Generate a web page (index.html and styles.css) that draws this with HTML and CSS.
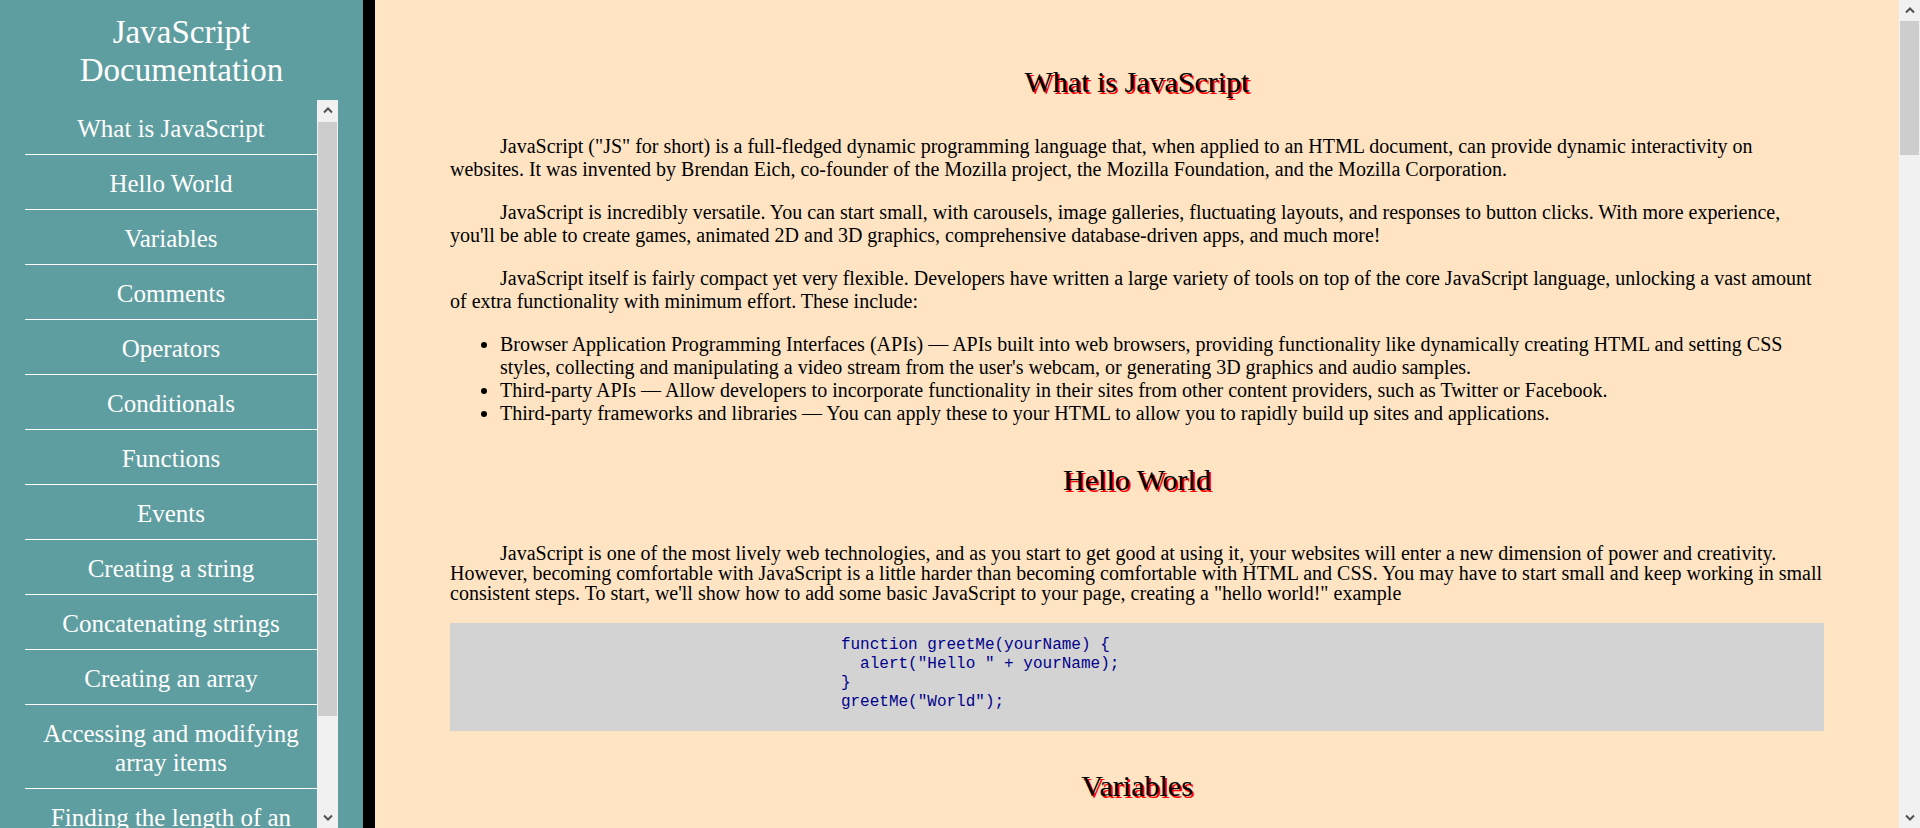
FILE: index.html
```html
<!DOCTYPE html>
<html lang="en">
<head>
<meta charset="utf-8">
<title>JavaScript Documentation</title>
<link rel="stylesheet" href="styles.css">
</head>
<body>
<nav class="navbar" id="navbar">
  <header class="nav-title">JavaScript Documentation</header>
  <div class="nav-scroll">
    <ul class="nav-list">
      <li><a class="nav-link" href="#What_is_JavaScript">What is JavaScript</a></li>
      <li><a class="nav-link" href="#Hello_World">Hello World</a></li>
      <li><a class="nav-link" href="#Variables">Variables</a></li>
      <li><a class="nav-link" href="#Comments">Comments</a></li>
      <li><a class="nav-link" href="#Operators">Operators</a></li>
      <li><a class="nav-link" href="#Conditionals">Conditionals</a></li>
      <li><a class="nav-link" href="#Functions">Functions</a></li>
      <li><a class="nav-link" href="#Events">Events</a></li>
      <li><a class="nav-link" href="#Creating_a_string">Creating a string</a></li>
      <li><a class="nav-link" href="#Concatenating_strings">Concatenating strings</a></li>
      <li><a class="nav-link" href="#Creating_an_array">Creating an array</a></li>
      <li><a class="nav-link" href="#Accessing_and_modifying_array_items">Accessing and modifying array items</a></li>
      <li><a class="nav-link" href="#Finding_the_length_of_an_array">Finding the length of an array</a></li>
      <li><a class="nav-link" href="#Removing_items_from_an_array">Removing items from an array</a></li>
    </ul>
    <div class="scrollbar">
      <span class="sb-btn"><svg width="10" height="7" viewBox="0 0 10 7"><path d="M1 5.5L5 1.5L9 5.5" fill="none" stroke="#505050" stroke-width="2"/></svg></span>
      <span class="sb-track"><span class="sb-thumb nav-thumb"></span></span>
      <span class="sb-btn"><svg width="10" height="7" viewBox="0 0 10 7"><path d="M1 1.5L5 5.5L9 1.5" fill="none" stroke="#505050" stroke-width="2"/></svg></span>
    </div>
  </div>
</nav>
<main class="main-doc" id="main-doc">
  <section class="main-section" id="What_is_JavaScript">
    <header class="section-title">What is JavaScript</header>
    <p>JavaScript ("JS" for short) is a full-fledged dynamic programming language that, when applied to an HTML document, can provide dynamic interactivity on websites. It was invented by Brendan Eich, co-founder of the Mozilla project, the Mozilla Foundation, and the Mozilla Corporation.</p>
    <p>JavaScript is incredibly versatile. You can start small, with carousels, image galleries, fluctuating layouts, and responses to button clicks. With more experience, you'll be able to create games, animated 2D and 3D graphics, comprehensive database-driven apps, and much more!</p>
    <p>JavaScript itself is fairly compact yet very flexible. Developers have written a large variety of tools on top of the core JavaScript language, unlocking a vast amount of extra functionality with minimum effort. These include:</p>
    <ul class="bullets">
      <li>Browser Application Programming Interfaces (APIs) — APIs built into web browsers, providing functionality like dynamically creating HTML and setting CSS styles, collecting and manipulating a video stream from the user's webcam, or generating 3D graphics and audio samples.</li>
      <li>Third-party APIs — Allow developers to incorporate functionality in their sites from other content providers, such as Twitter or Facebook.</li>
      <li>Third-party frameworks and libraries — You can apply these to your HTML to allow you to rapidly build up sites and applications.</li>
    </ul>
  </section>

  <section class="main-section" id="Hello_World">
    <header class="section-title">Hello World</header>
    <p class="tight">JavaScript is one of the most lively web technologies, and as you start to get good at using it, your websites will enter a new dimension of power and creativity. However, becoming comfortable with JavaScript is a little harder than becoming comfortable with HTML and CSS. You may have to start small and keep working in small consistent steps. To start, we'll show how to add some basic JavaScript to your page, creating a "hello world!" example</p>
    <pre class="code"><code>function greetMe(yourName) {
  alert("Hello " + yourName);
}
greetMe("World");</code></pre>
  </section>

  <section class="main-section" id="Variables">
    <header class="section-title">Variables</header>
    <p>Variables are containers that you can store values in. You start by declaring a variable with the var (less recommended) or the let keyword, followed by the name you give to the variable. A semicolon at the end of a line indicates where a statement ends. It is only required when you need to separate statements on a single line.</p>
    <p>After declaring a variable, you can give it a value, and later on you can retrieve the value by calling the variable name. You can also declare and initialize a variable on the same line.</p>
    <pre class="code"><code>let myVariable;
myVariable = 'Bob';
let myName = 'Chris';
myVariable;</code></pre>
  </section>

  <section class="main-section" id="Comments">
    <header class="section-title">Comments</header>
    <p>Comments are snippets of text that can be added along with code. The browser ignores text marked as comments. You can write comments in JavaScript just as you can in CSS. If your comment contains no line breaks, it's an option to put it behind two slashes.</p>
    <pre class="code"><code>/*
Everything in between is a comment.
*/
// This is a comment</code></pre>
  </section>

  <section class="main-section" id="Operators">
    <header class="section-title">Operators</header>
    <p>An operator is a mathematical symbol that produces a result based on two values (or variables). Here are some of the simplest operators, along with some examples to try in the JavaScript console:</p>
    <ul class="bullets">
      <li>Addition (+) — Add two numbers together or combine two strings.</li>
      <li>Subtraction, Multiplication, Division (-, *, /) — These do what you'd expect them to do in basic math.</li>
      <li>Assignment (=) — As you've seen already: this assigns a value to a variable.</li>
      <li>Strict equality (===) — This performs a test to see if two values are equal and of the same data type.</li>
    </ul>
    <pre class="code"><code>6 + 9;
'Hello ' + 'world!';
9 - 3;
let myVariable = 3;
myVariable === 4;</code></pre>
  </section>

  <section class="main-section" id="Conditionals">
    <header class="section-title">Conditionals</header>
    <p>Conditionals are code structures used to test if an expression returns true or not. A very common form of conditionals is the if...else statement. The expression inside the if () is the test. If the test returns true, the first block of code is run; if not, the code inside the else block runs instead.</p>
    <pre class="code"><code>let iceCream = 'chocolate';
if (iceCream === 'chocolate') {
  alert('Yay, I love chocolate ice cream!');
} else {
  alert('Awwww, but chocolate is my favorite...');
}</code></pre>
  </section>

  <section class="main-section" id="Functions">
    <header class="section-title">Functions</header>
    <p>Functions are a way of packaging functionality that you wish to reuse. It's possible to define a body of code as a function that executes when you call the function name in your code. This is a good alternative to repeatedly writing the same code.</p>
    <p>The return statement tells the browser to return the result variable out of the function so it is available to use. This is necessary because variables defined inside functions are only available inside those functions.</p>
    <pre class="code"><code>function multiply(num1, num2) {
  let result = num1 * num2;
  return result;
}
multiply(4, 7);</code></pre>
  </section>

  <section class="main-section" id="Events">
    <header class="section-title">Events</header>
    <p>Real interactivity on a website requires event handlers. These are code structures that listen for activity in the browser, and run code in response. The most obvious example is handling the click event, which is fired by the browser when you click on something with your mouse.</p>
    <pre class="code"><code>document.querySelector('html').addEventListener('click', function () {
  alert('Ouch! Stop poking me!');
});</code></pre>
  </section>

  <section class="main-section" id="Creating_a_string">
    <header class="section-title">Creating a string</header>
    <p>Just like we did with numbers, we are declaring a variable, initializing it with a string value, and then returning the value. The only difference here is that when writing a string, you need to surround the value with quotes.</p>
    <pre class="code"><code>const string = 'The revolution will not be televised.';
console.log(string);</code></pre>
  </section>

  <section class="main-section" id="Concatenating_strings">
    <header class="section-title">Concatenating strings</header>
    <p>Concatenate is a fancy programming word that means "join together". Joining together strings in JavaScript uses template literals, or the + operator, to put one string after another.</p>
    <pre class="code"><code>const one = 'Hello, ';
const two = 'how are you?';
const joined = one + two;
console.log(joined); // "Hello, how are you?"</code></pre>
  </section>

  <section class="main-section" id="Creating_an_array">
    <header class="section-title">Creating an array</header>
    <p>Arrays consist of square brackets and items that are separated by commas. The items in an array can be of any type, and you can even store arrays inside of arrays.</p>
    <pre class="code"><code>const shopping = ['bread', 'milk', 'cheese', 'hummus', 'noodles'];
console.log(shopping);</code></pre>
  </section>

  <section class="main-section" id="Accessing_and_modifying_array_items">
    <header class="section-title">Accessing and modifying array items</header>
    <p>Items in an array are numbered, starting from zero. This number is called the item's index. So the first item has index 0, the second has index 1, and so on. You can access individual items in the array using bracket notation and supplying the item's index.</p>
    <pre class="code"><code>const shopping = ['bread', 'milk', 'cheese', 'hummus', 'noodles'];
console.log(shopping[0]);
// returns "bread"
shopping[0] = 'tahini';</code></pre>
  </section>

  <section class="main-section" id="Finding_the_length_of_an_array">
    <header class="section-title">Finding the length of an array</header>
    <p>You can find out the length of an array (how many items are in it) in exactly the same way as you find out the length (in characters) of a string — by using the length property.</p>
    <pre class="code"><code>const shopping = ['bread', 'milk', 'cheese', 'hummus', 'noodles'];
console.log(shopping.length); // 5</code></pre>
  </section>

  <section class="main-section" id="Removing_items_from_an_array">
    <header class="section-title">Removing items from an array</header>
    <p>To remove the last item from the array, use pop(). The pop() method returns the item that was removed. To remove the first item from an array, use shift().</p>
    <pre class="code"><code>const myArray = ['Manchester', 'Liverpool'];
myArray.pop();
myArray.shift();</code></pre>
  </section>
</main>
<div class="scrollbar page-scrollbar">
  <span class="sb-btn"><svg width="10" height="7" viewBox="0 0 10 7"><path d="M1 5.5L5 1.5L9 5.5" fill="none" stroke="#505050" stroke-width="2"/></svg></span>
  <span class="sb-track"><span class="sb-thumb page-thumb"></span></span>
  <span class="sb-btn"><svg width="10" height="7" viewBox="0 0 10 7"><path d="M1 1.5L5 5.5L9 1.5" fill="none" stroke="#505050" stroke-width="2"/></svg></span>
</div>
</body>
</html>
```

FILE: styles.css
```css
html,
body {
  margin: 0;
  height: 100%;
}

body {
  display: flex;
  overflow: hidden;
  font-family: "Liberation Serif", "Times New Roman", serif;
  background: #ffe4c4;
  color: #000;
}

/* ---------- sidebar ---------- */
.navbar {
  flex: 0 0 363px;
  height: 100vh;
  background: #5f9ea0;
  border-right: 12px solid #000;
  display: flex;
  flex-direction: column;
  color: #fff;
}

.nav-title {
  padding: 13px 20px 0;
  font-size: 33px;
  line-height: 38px;
  text-align: center;
}

.nav-scroll {
  flex: 1;
  min-height: 0;
  display: flex;
  margin: 11px 25px 0;
}

.nav-list {
  flex: 1;
  list-style: none;
  margin: 0;
  padding: 0;
  overflow: hidden;
}

.nav-link {
  display: block;
  padding: 14px 0 11px;
  font-size: 25px;
  line-height: 29px;
  text-align: center;
  color: #fff;
  text-decoration: none;
  border-bottom: 1px solid #fff;
}

/* ---------- drawn scrollbars ---------- */
.scrollbar {
  flex: 0 0 21px;
  display: flex;
  flex-direction: column;
  background: #f1f1f1;
}

.page-scrollbar {
  height: 100vh;
}

.sb-btn {
  flex: 0 0 21px;
  display: flex;
  align-items: center;
  justify-content: center;
}

.sb-track {
  flex: 1;
  display: flex;
  flex-direction: column;
}

.sb-thumb {
  display: block;
  margin: 0 1px;
  background: #cdcdcd;
}

.nav-thumb {
  margin-top: 1px;
  height: 594px;
}

.page-thumb {
  height: 134px;
}

/* ---------- main ---------- */
.main-doc {
  flex: 1;
  min-width: 0;
  height: 100vh;
  overflow: hidden;
  box-sizing: border-box;
  padding: 27px 75px 60px;
  font-size: 20px;
  line-height: 23px;
}

.section-title {
  margin: 39px 0 38px;
  font-size: 30px;
  line-height: 31px;
  font-weight: normal;
  text-align: center;
  text-shadow: 2px 2px 0 #ff0000;
}

.main-doc p {
  margin: 20px 0;
  text-indent: 50px;
}

.main-doc p.tight {
  margin-top: 48px;
  line-height: 20px;
}

.bullets {
  margin: 20px 0;
  padding-left: 50px;
}

.code {
  margin: 20px 0;
  padding: 13px 0 19px 28.45%;
  background: #d3d3d3;
  font-family: "Liberation Mono", "Courier New", monospace;
  font-size: 16px;
  line-height: 19px;
  color: #00008b;
  white-space: pre;
}

.code code {
  font-family: inherit;
}
```
